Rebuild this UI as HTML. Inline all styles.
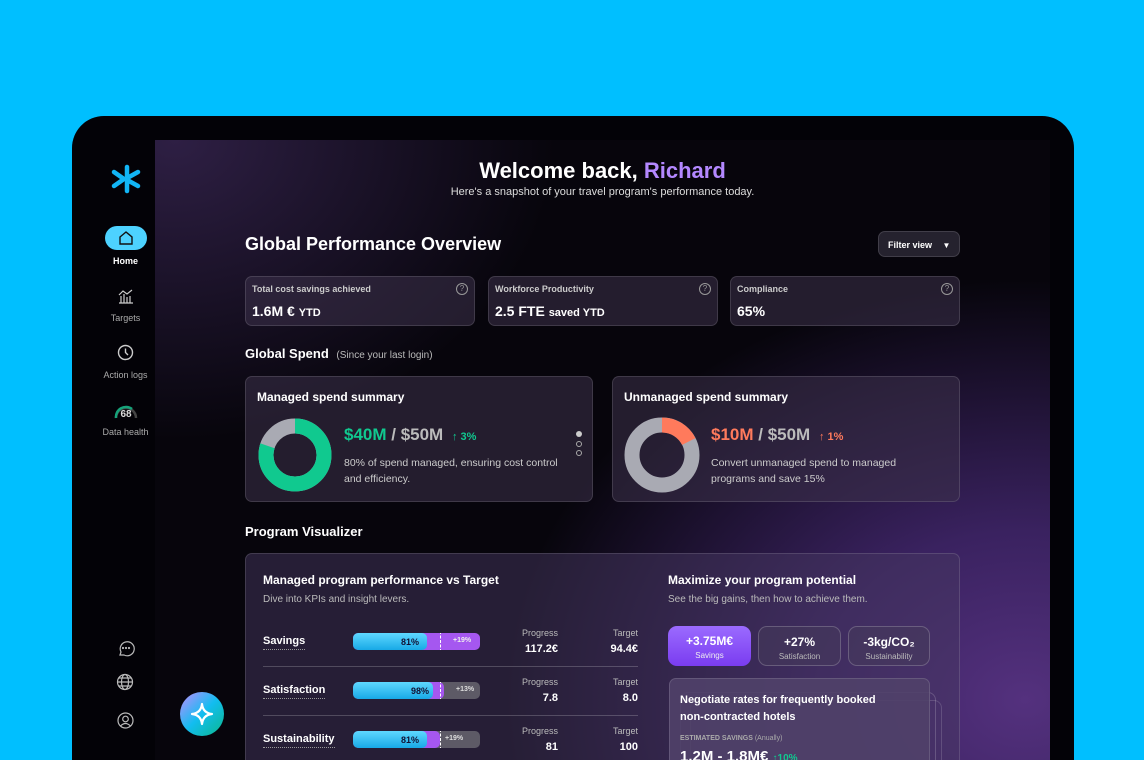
<!DOCTYPE html>
<html><head><meta charset="utf-8"><style>
*{box-sizing:border-box;margin:0;padding:0}
html,body{width:1144px;height:760px;overflow:hidden}
body{background:#00bfff;font-family:"Liberation Sans",sans-serif;color:#fff;position:relative}
.frame{position:absolute;left:72px;top:116px;width:1002px;height:644px;background:#030207;border-radius:32px 32px 0 0;overflow:hidden}
.content{position:absolute;left:83px;top:24px;width:895px;height:620px;
background:radial-gradient(ellipse 520px 420px at 870px 560px,#54317e 0%,#3a2260 40%,rgba(20,10,35,0) 100%),
radial-gradient(ellipse 380px 300px at 20px 0px,#2e1f44 0%,rgba(20,12,30,0) 100%),#07050c}
.abs{position:absolute}
.card{position:absolute;background:rgba(60,50,75,.55);border:1px solid rgba(255,255,255,.13);border-radius:7px}
.nav{position:absolute;left:0;width:83px;text-align:center;font-size:9px;color:#aaa}
.q{position:absolute;right:6px;top:6px;width:12px;height:12px;border:1px solid #999;border-radius:50%;font-size:8px;color:#999;text-align:center;line-height:10px}
.bar{position:absolute;left:353px;width:127px;height:17px;border-radius:5px;overflow:hidden;font-size:9px;font-weight:bold}
.lbl{position:absolute;left:263px;font-size:11px;font-weight:bold;border-bottom:1px dotted #999;padding-bottom:2px}
.pv{position:absolute;font-size:9px;color:#bbb;text-align:right}
.pv b{display:block;font-size:11px;color:#fff;margin-top:5px}
.pill{position:absolute;top:626px;height:40px;border-radius:9px;border:1px solid rgba(255,255,255,.2);text-align:center;font-size:12px;font-weight:bold;padding-top:8px}
.pill span{display:block;font-size:8px;font-weight:normal;color:#bbb;margin-top:3px}
</style></head><body>
<div class="frame">
<div class="content"></div>
</div>
<!-- sidebar -->
<svg class="abs" style="left:110px;top:163px" width="32" height="32" viewBox="0 0 32 32"><g stroke="#12b5f5" stroke-width="4.5" stroke-linecap="round" fill="none"><path d="M17 4 L17 28"/><path d="M4 9 L14 16 L4 23"/><path d="M28 9 L19 14"/><path d="M28 23 L19 18"/></g></svg>
<div class="abs" style="left:105px;top:226px;width:42px;height:24px;background:#4dd2ff;border-radius:12px"></div>
<svg class="abs" style="left:118px;top:230px" width="16" height="16" viewBox="0 0 16 16"><path d="M2 7 L8 2 L14 7 V14 H2 Z" fill="none" stroke="#111" stroke-width="1.4"/></svg>
<div class="nav" style="left:84px;top:256px;color:#fff;font-weight:bold">Home</div>
<svg class="abs" style="left:117px;top:287px" width="18" height="18" viewBox="0 0 18 18" fill="none" stroke="#ccc" stroke-width="1.2"><path d="M2 16H16M4 16V9M7 16V7M10 16V10M13 16V9M2 8L6 4L10 7L15 3"/></svg>
<div class="nav" style="left:84px;top:313px">Targets</div>
<svg class="abs" style="left:117px;top:344px" width="17" height="17" viewBox="0 0 17 17" fill="none" stroke="#ccc" stroke-width="1.4"><circle cx="8.5" cy="8.5" r="7"/><path d="M8.5 4.5V8.5L11 11"/></svg>
<div class="nav" style="left:84px;top:370px">Action logs</div>
<svg class="abs" style="left:113px;top:401px" width="26" height="20" viewBox="0 0 26 20"><path d="M3 17 A10 10 0 0 1 23 17" fill="none" stroke="#444" stroke-width="2.5"/><path d="M3 17 A10 10 0 0 1 19 8" fill="none" stroke="#16a37a" stroke-width="2.5"/><text x="13" y="16" font-size="10" font-weight="bold" fill="#ddd" text-anchor="middle" font-family="Liberation Sans">68</text></svg>
<div class="nav" style="left:84px;top:427px">Data health</div>
<svg class="abs" style="left:116px;top:639px" width="20" height="20" viewBox="0 0 20 20" fill="none" stroke="#bbb" stroke-width="1.2"><path d="M4 16 L5 13 A7 7 0 1 1 8 16 Z"/><circle cx="7" cy="9" r=".5"/><circle cx="10" cy="9" r=".5"/><circle cx="13" cy="9" r=".5"/></svg>
<svg class="abs" style="left:116px;top:673px" width="18" height="18" viewBox="0 0 18 18" fill="none" stroke="#bbb" stroke-width="1.2"><circle cx="9" cy="9" r="7.5"/><ellipse cx="9" cy="9" rx="3.5" ry="7.5"/><path d="M1.5 9H16.5M3 5H15M3 13H15"/></svg>
<svg class="abs" style="left:117px;top:712px" width="17" height="17" viewBox="0 0 17 17" fill="none" stroke="#bbb" stroke-width="1.2"><circle cx="8.5" cy="8.5" r="7.5"/><circle cx="8.5" cy="7" r="2.8"/><path d="M3.5 14 Q8.5 9 13.5 14"/></svg>
<div class="abs" style="left:180px;top:692px;width:44px;height:44px;border-radius:50%;background:linear-gradient(135deg,#c08cff,#12bdf0 50%,#0bb88c)"></div>
<svg class="abs" style="left:190px;top:702px" width="24" height="24" viewBox="0 0 24 24"><path d="M12 2 Q13 11 22 12 Q13 13 12 22 Q11 13 2 12 Q11 11 12 2Z" fill="none" stroke="#fff" stroke-width="2.2" stroke-linejoin="round"/></svg>

<!-- header -->
<div class="abs" style="left:155px;width:895px;top:158px;text-align:center;font-size:22px;font-weight:bold">Welcome back, <span style="color:#b388ff">Richard</span></div>
<div class="abs" style="left:155px;width:895px;top:186px;text-align:center;font-size:11px;color:#ddd">Here's a snapshot of your travel program's performance today.</div>
<div class="abs" style="left:245px;top:234px;font-size:18px;font-weight:bold">Global Performance Overview</div>
<div class="card" style="left:878px;top:231px;width:82px;height:26px;font-size:9px;font-weight:bold;padding:8px 0 0 9px;background:#25222e">Filter view <span style="margin-left:8px;font-size:8px">&#9660;</span></div>

<div class="card" style="left:245px;top:276px;width:230px;height:50px"><div class="abs" style="left:6px;top:7px;font-size:9px;color:#ccc;font-weight:bold">Total cost savings achieved</div><div class="q">?</div><div class="abs" style="left:6px;top:26px;font-size:14px;font-weight:bold">1.6M € <span style="font-size:11px">YTD</span></div></div>
<div class="card" style="left:488px;top:276px;width:230px;height:50px"><div class="abs" style="left:6px;top:7px;font-size:9px;color:#ccc;font-weight:bold">Workforce Productivity</div><div class="q">?</div><div class="abs" style="left:6px;top:26px;font-size:14px;font-weight:bold">2.5 FTE <span style="font-size:11px">saved YTD</span></div></div>
<div class="card" style="left:730px;top:276px;width:230px;height:50px"><div class="abs" style="left:6px;top:7px;font-size:9px;color:#ccc;font-weight:bold">Compliance</div><div class="q">?</div><div class="abs" style="left:6px;top:26px;font-size:14px;font-weight:bold">65%</div></div>

<div class="abs" style="left:245px;top:346px;font-size:13px;font-weight:bold">Global Spend <span style="font-size:10px;font-weight:normal;color:#bbb;margin-left:4px">(Since your last login)</span></div>

<div class="card" style="left:245px;top:376px;width:348px;height:126px">
<div class="abs" style="left:11px;top:13px;font-size:12px;font-weight:bold">Managed spend summary</div>
<svg class="abs" style="left:11px;top:40px" width="76" height="76" viewBox="0 0 76 76"><circle cx="38" cy="38" r="29" fill="none" stroke="#a9aab3" stroke-width="15"/><circle cx="38" cy="38" r="29" fill="none" stroke="#10c98f" stroke-width="15" stroke-dasharray="145.8 182.2" transform="rotate(-90 38 38)"/></svg>
<div class="abs" style="left:98px;top:48px;font-size:17px;font-weight:bold;color:#10c98f">$40M <span style="color:#bbb">/ $50M</span> <span style="font-size:11px;margin-left:4px">↑ 3%</span></div>
<div class="abs" style="left:98px;top:78px;font-size:10.5px;color:#ccc;line-height:16px;width:228px">80% of spend managed, ensuring cost control and efficiency.</div>
<div class="abs" style="left:330px;top:54px;width:6px;height:6px;border-radius:50%;background:#ccc"></div>
<div class="abs" style="left:330px;top:64px;width:6px;height:6px;border-radius:50%;border:1px solid #aaa"></div>
<div class="abs" style="left:330px;top:73px;width:6px;height:6px;border-radius:50%;border:1px solid #aaa"></div>
</div>
<div class="card" style="left:612px;top:376px;width:348px;height:126px">
<div class="abs" style="left:11px;top:13px;font-size:12px;font-weight:bold">Unmanaged spend summary</div>
<svg class="abs" style="left:11px;top:40px" width="76" height="76" viewBox="0 0 76 76"><circle cx="38" cy="38" r="30" fill="none" stroke="#a9aab3" stroke-width="15"/><circle cx="38" cy="38" r="30" fill="none" stroke="#ff7a5c" stroke-width="15" stroke-dasharray="33 200" transform="rotate(-90 38 38)"/></svg>
<div class="abs" style="left:98px;top:48px;font-size:17px;font-weight:bold;color:#ff7a5c">$10M <span style="color:#bbb">/ $50M</span> <span style="font-size:11px;margin-left:4px">↑ 1%</span></div>
<div class="abs" style="left:98px;top:78px;font-size:10.5px;color:#ccc;line-height:16px;width:205px">Convert unmanaged spend to managed programs and save 15%</div>
</div>

<div class="abs" style="left:245px;top:524px;font-size:13px;font-weight:bold">Program Visualizer</div>
<div class="card" style="left:245px;top:553px;width:715px;height:230px;background:rgba(70,55,95,.5)"></div>
<div class="abs" style="left:263px;top:573px;font-size:12px;font-weight:bold">Managed program performance vs Target</div>
<div class="abs" style="left:263px;top:594px;font-size:10px;color:#bbb">Dive into KPIs and insight levers.</div>

<div class="lbl" style="top:635px">Savings</div>
<div class="bar" style="top:633px;background:#a557f0"><div class="abs" style="left:0;top:0;width:74px;height:17px;background:linear-gradient(#5fd8ff,#18a9e6);border-radius:5px;text-align:right;padding:4px 8px 0 0;color:#113">81%</div><div class="abs" style="left:100px;top:4px;color:#eee;font-size:7px">+19%</div><div class="abs" style="left:87px;top:-2px;height:21px;border-left:1px dashed #fff"></div></div>
<div class="pv" style="left:510px;top:628px;width:48px">Progress<b>117.2€</b></div>
<div class="pv" style="left:590px;top:628px;width:48px">Target<b>94.4€</b></div>
<div class="abs" style="left:263px;top:666px;width:375px;height:1px;background:rgba(255,255,255,.2)"></div>

<div class="lbl" style="top:684px">Satisfaction</div>
<div class="bar" style="top:682px;background:#5d5a66"><div class="abs" style="left:0;top:0;width:91px;height:17px;background:#a557f0;border-radius:5px"></div><div class="abs" style="left:0;top:0;width:80px;height:17px;background:linear-gradient(#5fd8ff,#18a9e6);border-radius:5px;text-align:right;padding:4px 4px 0 0;color:#113">98%</div><div class="abs" style="left:103px;top:4px;color:#ddd;font-size:7px">+13%</div><div class="abs" style="left:87px;top:-2px;height:21px;border-left:1px dashed #fff"></div></div>
<div class="pv" style="left:510px;top:677px;width:48px">Progress<b>7.8</b></div>
<div class="pv" style="left:590px;top:677px;width:48px">Target<b>8.0</b></div>
<div class="abs" style="left:263px;top:715px;width:375px;height:1px;background:rgba(255,255,255,.2)"></div>

<div class="lbl" style="top:733px">Sustainability</div>
<div class="bar" style="top:731px;background:#5d5a66"><div class="abs" style="left:0;top:0;width:87px;height:17px;background:#a557f0;border-radius:5px"></div><div class="abs" style="left:0;top:0;width:74px;height:17px;background:linear-gradient(#5fd8ff,#18a9e6);border-radius:5px;text-align:right;padding:4px 8px 0 0;color:#113">81%</div><div class="abs" style="left:92px;top:4px;color:#ddd;font-size:7px">+19%</div><div class="abs" style="left:87px;top:-2px;height:21px;border-left:1px dashed #fff"></div></div>
<div class="pv" style="left:510px;top:726px;width:48px">Progress<b>81</b></div>
<div class="pv" style="left:590px;top:726px;width:48px">Target<b>100</b></div>

<div class="abs" style="left:668px;top:573px;font-size:12px;font-weight:bold">Maximize your program potential</div>
<div class="abs" style="left:668px;top:594px;font-size:10px;color:#bbb">See the big gains, then how to achieve them.</div>
<div class="pill" style="left:668px;width:83px;background:linear-gradient(#9b6bff,#7a3cf0);border:none">+3.75M€<span style="color:#eee">Savings</span></div>
<div class="pill" style="left:758px;width:83px;background:rgba(70,60,90,.5)">+27%<span>Satisfaction</span></div>
<div class="pill" style="left:848px;width:82px;background:rgba(70,60,90,.5)">-3kg/CO₂<span>Sustainability</span></div>
<div class="abs" style="left:690px;top:700px;width:252px;height:80px;border:1px solid rgba(255,255,255,.15);border-radius:8px"></div>
<div class="abs" style="left:680px;top:692px;width:256px;height:80px;border:1px solid rgba(255,255,255,.18);border-radius:8px"></div>
<div class="card" style="left:669px;top:678px;width:261px;height:100px;background:rgba(80,65,105,.9)">
<div class="abs" style="left:10px;top:13px;width:210px;font-size:11px;font-weight:bold;line-height:17px">Negotiate rates for frequently booked non-contracted hotels</div>
<div class="abs" style="left:10px;top:56px;font-size:7px;font-weight:bold;color:#aaa">ESTIMATED SAVINGS <span style="font-weight:normal">(Anually)</span></div>
<div class="abs" style="left:10px;top:69px;font-size:15px;font-weight:bold">1.2M - 1.8M€ <span style="font-size:10px;color:#10c98f">↑10%</span></div>
</div>
</body></html>
